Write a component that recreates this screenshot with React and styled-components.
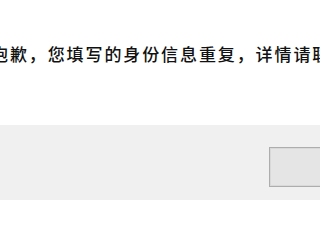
import styled, { createGlobalStyle } from 'styled-components';

const GlobalStyle = createGlobalStyle`
    html,
    body {
        margin: 0;
        padding: 0;
        height: 200px;
        overflow: hidden;
        background: #ffffff;
    }
`;

const Dialog = styled.div`
    width: 100%;
    height: 200px;
    display: flex;
    flex-direction: column;
    font-family: 'Noto Sans CJK SC', 'Noto Sans', sans-serif;
    overflow: hidden;
`;

const Body = styled.div`
    height: 125px;
    flex-shrink: 0;
    background: #ffffff;
    padding-top: 43px;
    box-sizing: border-box;
    overflow: hidden;
`;

const Message = styled.p`
    margin: 0 0 0 -9px;
    font-size: 17px;
    font-weight: 500;
    line-height: 22px;
    letter-spacing: 1.9px;
    color: #111111;
    white-space: nowrap;
`;

const Footer = styled.div`
    flex: 1;
    background: #f0f0f0;
    display: flex;
    justify-content: flex-start;
    align-items: flex-start;
    padding: 22px 0 0 269px;
    box-sizing: border-box;
    overflow: hidden;
`;

const Button = styled.button`
    flex-shrink: 0;
    width: 88px;
    height: 40px;
    border: 1px solid #adadad;
    box-shadow: inset 0 0 0 1px #d9d9d9;
    background: #e5e5e5;
    padding: 0;
`;

export default function App() {
    return (
        <Dialog>
            <GlobalStyle />
            <Body>
                <Message>抱歉，您填写的身份信息重复，详情请联系客服</Message>
            </Body>
            <Footer>
                <Button aria-label="确定" />
            </Footer>
        </Dialog>
    );
}
